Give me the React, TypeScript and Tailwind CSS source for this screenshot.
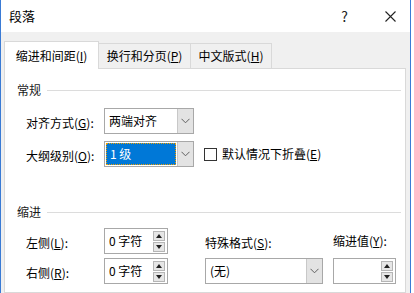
const font = {
  fontFamily: '"Noto Sans CJK SC", "Noto Sans", "Liberation Sans", sans-serif',
};

function Chevron() {
  return (
    <svg width="9" height="6" viewBox="0 0 9 6" aria-hidden="true">
      <path d="M0.5 0.8l4 4 4-4" fill="none" stroke="#606060" strokeWidth="1" />
    </svg>
  );
}

function Tri({ down }: { down?: boolean }) {
  return (
    <svg width="6" height="4" viewBox="0 0 6 4" aria-hidden="true">
      <path d={down ? "M0 0h6L3 4z" : "M0 4h6L3 0z"} fill="#202020" />
    </svg>
  );
}

function Spin({ w, text }: { w: string; text?: string }) {
  return (
    <div
      className={`flex h-[26px] items-center justify-between border border-[#a8a8a8] bg-white pl-[4px] pr-[2px] ${w}`}
    >
      <span className="text-[12px] leading-none">{text}</span>
      <div className="flex flex-col gap-[1px]">
        <div className="flex h-[10px] w-[12px] items-center justify-center border border-[#b5b5b5] bg-[#e6e6e6]">
          <Tri />
        </div>
        <div className="flex h-[10px] w-[12px] items-center justify-center border border-[#b5b5b5] bg-[#e6e6e6]">
          <Tri down />
        </div>
      </div>
    </div>
  );
}

function Select({
  w,
  text,
  selected,
}: {
  w: string;
  text: string;
  selected?: boolean;
}) {
  return (
    <div className={`flex h-[26px] border border-[#a8a8a8] bg-white ${w}`}>
      <div className="flex min-w-0 flex-1 items-center p-[1px]">
        {selected ? (
          <div className="flex h-full w-full items-center border border-dotted border-[#f0a000] bg-[#0078d7] pl-[3px] text-[12px] text-white">
            {text}
          </div>
        ) : (
          <span className="pl-[3px] text-[12px]">{text}</span>
        )}
      </div>
      <div className="flex w-[16px] items-center justify-center border-l border-[#c8c8c8] bg-[#e3e3e3]">
        <Chevron />
      </div>
    </div>
  );
}

function Label({ a, k, b = ":" }: { a: string; k: string; b?: string }) {
  return (
    <span className="text-[12px] whitespace-nowrap">
      {a}(<u>{k}</u>){b}
    </span>
  );
}

function Kop({ titel }: { titel: string }) {
  return (
    <div className="flex h-[16px] items-center pl-[12px] pr-[4px]">
      <span className="text-[12px] text-[#1a1a1a]">{titel}</span>
      <div className="ml-[6px] h-px flex-1 bg-[#dcdcdc]" />
    </div>
  );
}

export default function App() {
  return (
    <div
      className="h-[293px] w-[414px] overflow-hidden bg-white text-black"
      style={font}
    >
      <div className="flex h-full w-[411px] flex-col border-x border-[#3a7bd5]">
        {/* titelbalk */}
        <div className="flex h-[32px] shrink-0 items-center bg-white pl-[8px]">
          <span className="text-[13px]">段落</span>
          <span className="ml-auto text-[14px] text-[#222]">?</span>
          <svg
            width="11"
            height="11"
            viewBox="0 0 11 11"
            className="ml-[37px] mr-[14px]"
            aria-hidden="true"
          >
            <path d="M0.5 0.5l10 10M10.5 0.5l-10 10" stroke="#222" strokeWidth="1.1" />
          </svg>
        </div>

        <div className="flex flex-1 flex-col bg-[#f0f0f0] pl-[3px] pr-[4px] pt-[9px]">
          {/* tabs */}
          <div className="flex h-[27px] items-end">
            <div className="z-10 -mb-px flex h-[28px] w-[95px] items-center justify-center border border-b-0 border-[#d9d9d9] bg-white text-[12px]">
              缩进和间距(<u>I</u>)
            </div>
            <div className="flex h-[25px] w-[92px] items-center justify-center border border-l-0 border-b-0 border-[#d9d9d9] text-[12px]">
              换行和分页(<u>P</u>)
            </div>
            <div className="flex h-[25px] w-[81px] items-center justify-center border border-l-0 border-b-0 border-[#d9d9d9] text-[12px]">
              中文版式(<u>H</u>)
            </div>
          </div>

          {/* paneel */}
          <div className="flex-1 border border-[#d9d9d9] bg-white pt-[13px]">
            <Kop titel="常规" />

            <div className="mt-[10px] flex h-[26px] items-center pl-[21px]">
              <div className="w-[78px]">
                <Label a="对齐方式" k="G" />
              </div>
              <Select w="w-[90px]" text="两端对齐" />
            </div>

            <div className="mt-[7px] flex h-[26px] items-center pl-[21px]">
              <div className="w-[78px]">
                <Label a="大纲级别" k="O" />
              </div>
              <Select w="w-[90px]" text="1 级" selected />
              <div className="ml-[10px] h-[13px] w-[13px] border border-[#333] bg-white" />
              <span className="ml-[5px] text-[12px]">
                默认情况下折叠(<u>E</u>)
              </span>
            </div>

            <div className="mt-[37px]">
              <Kop titel="缩进" />
            </div>

            <div className="mt-[8px] flex h-[26px] items-center pl-[21px]">
              <div className="w-[78px]">
                <Label a="左侧" k="L" />
              </div>
              <Spin w="w-[64px]" text="0 字符" />
              <div className="ml-[37px] w-[128px]">
                <Label a="特殊格式" k="S" />
              </div>
              <Label a="缩进值" k="Y" />
            </div>

            <div className="mt-[4px] flex h-[26px] items-center pl-[21px]">
              <div className="w-[78px]">
                <Label a="右侧" k="R" />
              </div>
              <Spin w="w-[64px]" text="0 字符" />
              <div className="ml-[37px]">
                <Select w="w-[118px]" text="(无)" />
              </div>
              <div className="ml-[10px]">
                <Spin w="w-[63px]" />
              </div>
            </div>
          </div>
        </div>
      </div>
    </div>
  );
}
